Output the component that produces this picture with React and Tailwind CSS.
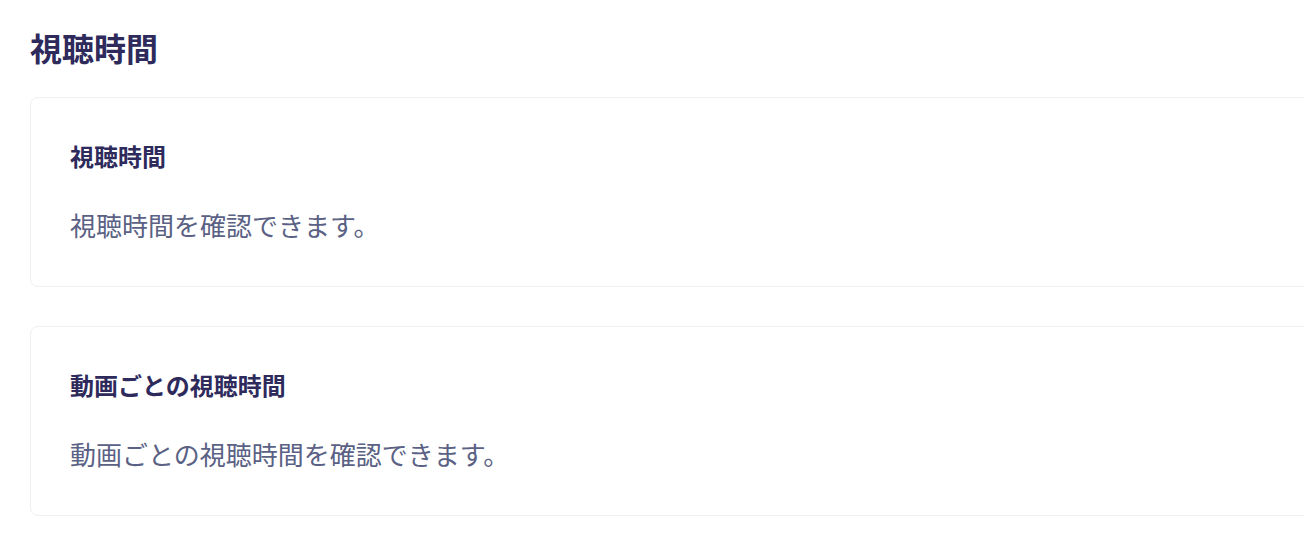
const sections = [
  { title: "視聴時間", description: "視聴時間を確認できます。" },
  { title: "動画ごとの視聴時間", description: "動画ごとの視聴時間を確認できます。" },
];

function InfoCard({ title, description }) {
  return (
    <div className="rounded-lg border border-[#efeff3] bg-white pl-[39px] pt-[40px] pb-[43px] flex flex-col gap-[33px]">
      <h2 className="text-[24px] leading-[36px] font-bold text-[#2e2b5c]">{title}</h2>
      <p className="text-[26px] leading-[36px] text-[#5a6184]">{description}</p>
    </div>
  );
}

export default function App() {
  return (
    <div
      className="min-h-[542px] bg-white pl-[30px] pt-[26px] overflow-hidden"
      style={{ fontFamily: '"Noto Sans CJK JP", "Noto Sans", sans-serif' }}
    >
      <h1 className="text-[32px] leading-[42px] font-bold text-[#2e2b5c]">視聴時間</h1>

      {/* cards run past the right edge */}
      <div className="mt-[29px] w-[1320px] flex flex-col gap-[39px]">
        {sections.map((s) => (
          <InfoCard key={s.title} title={s.title} description={s.description} />
        ))}
      </div>
    </div>
  );
}
